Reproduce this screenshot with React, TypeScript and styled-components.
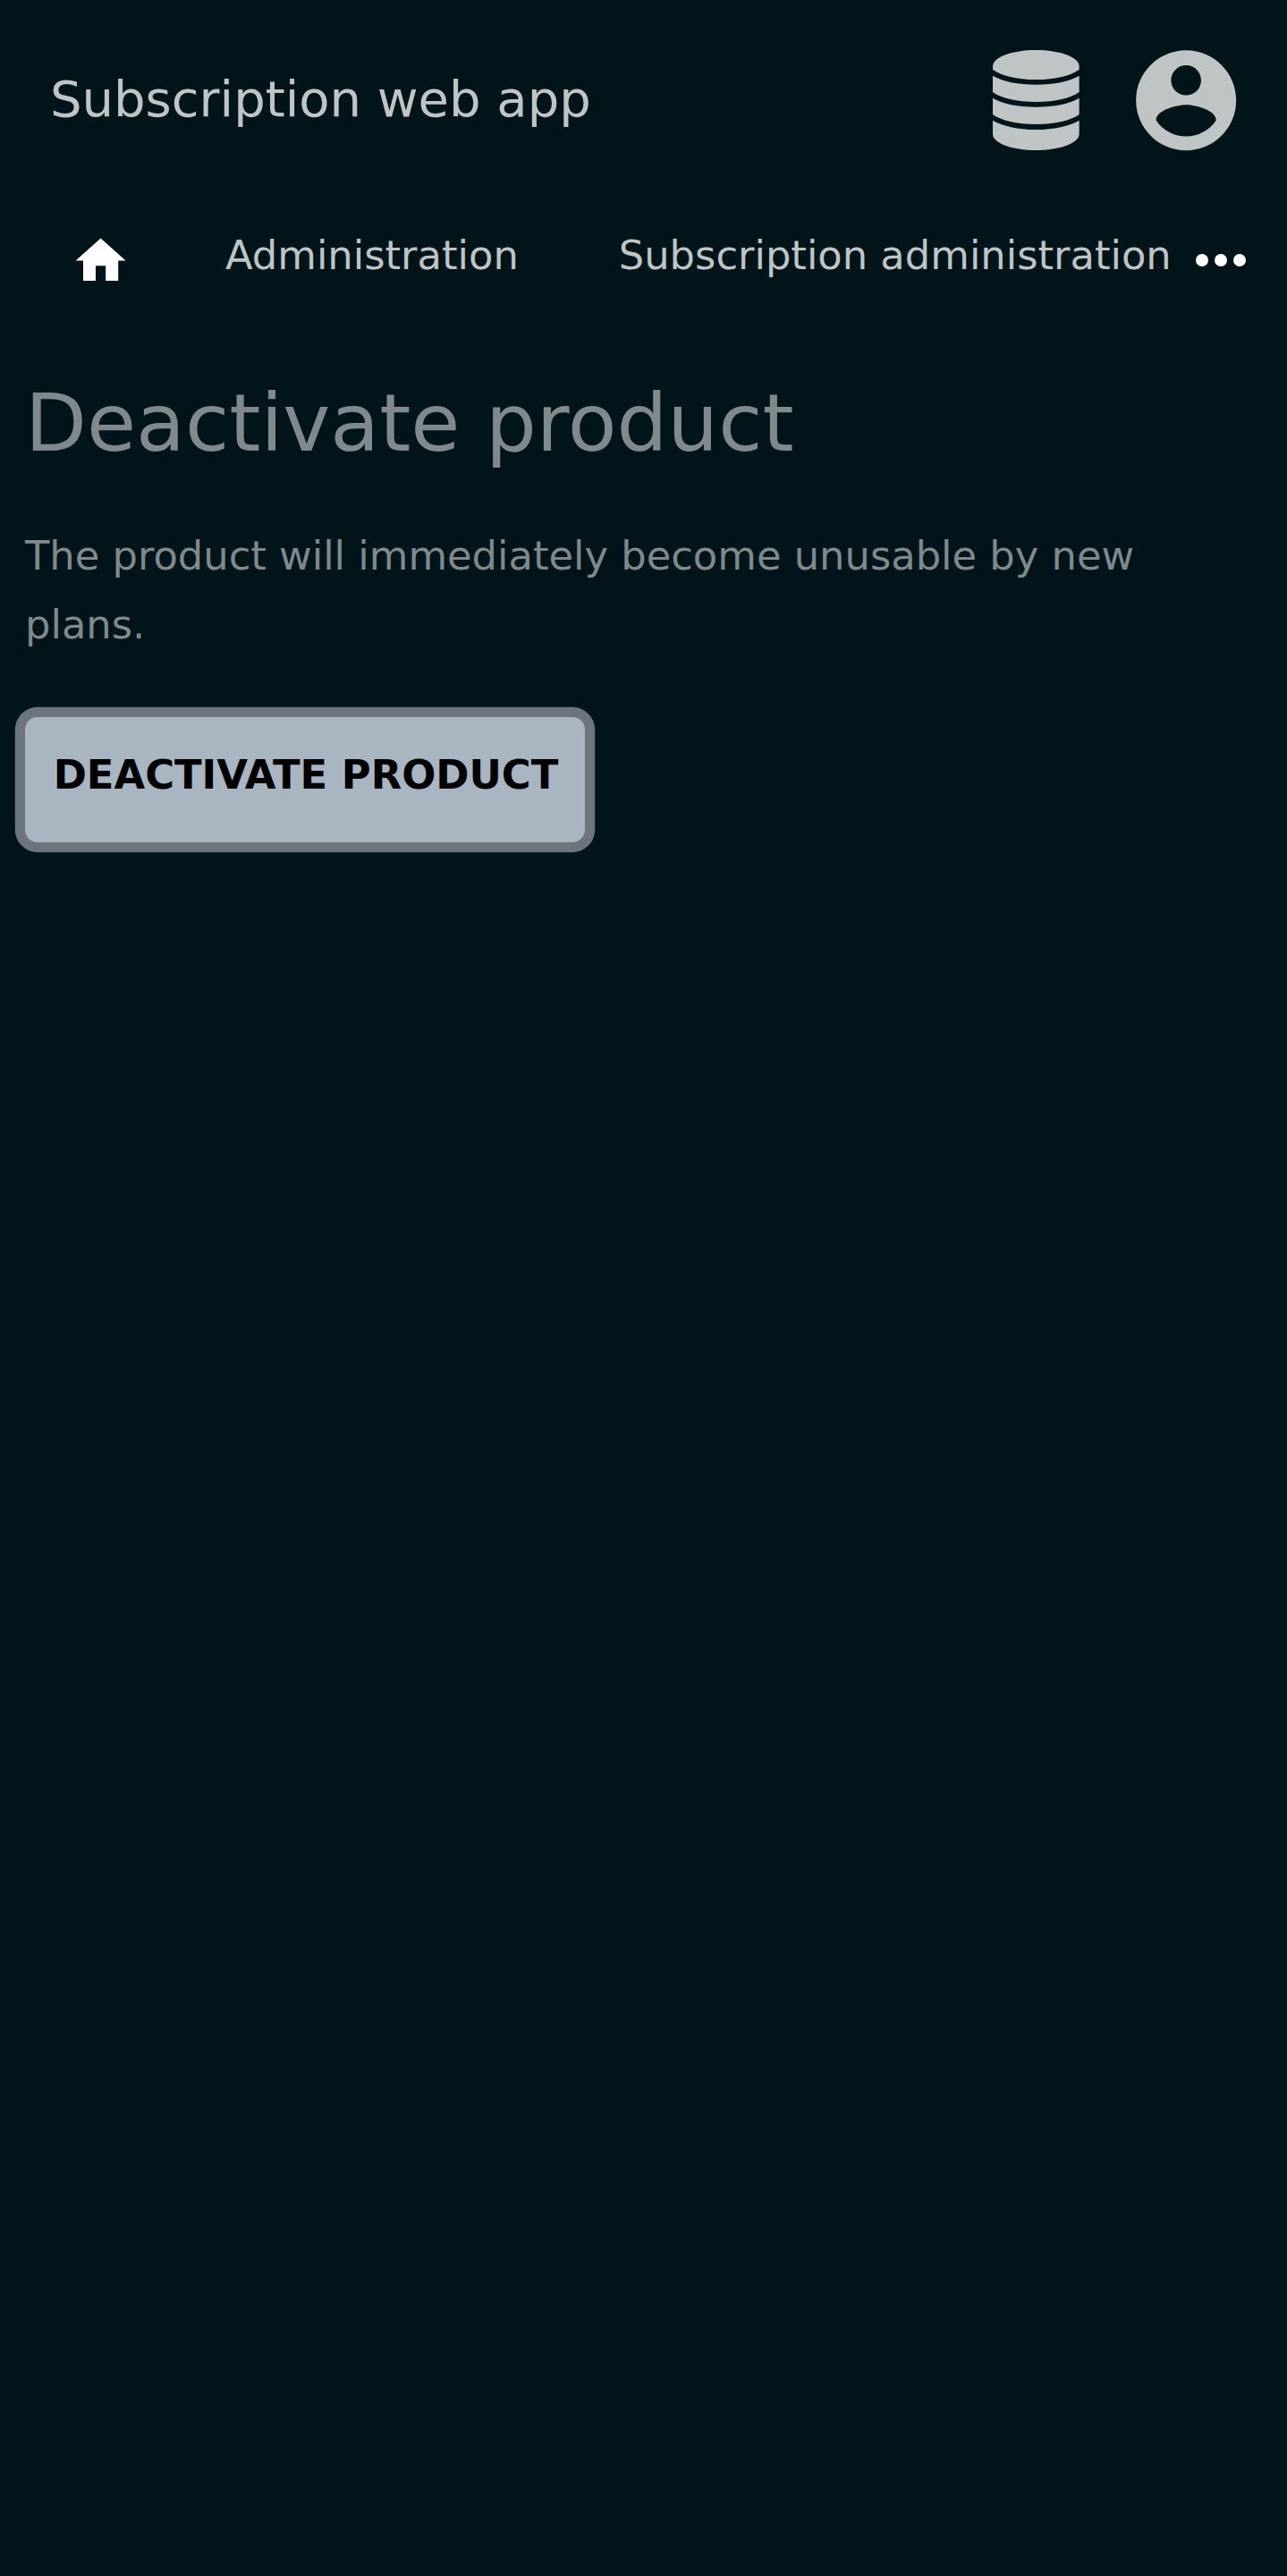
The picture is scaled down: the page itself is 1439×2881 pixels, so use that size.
import React from "react";
import styled, { createGlobalStyle } from "styled-components";

const GlobalStyle = createGlobalStyle`
  *, *::before, *::after { box-sizing: border-box; }
  html { background: #001419; }
  body {
    margin: 0;
    background: #001419;
    color: #80898c;
    font-family: "DejaVu Sans", sans-serif;
    font-size: 44.8px;
    line-height: 77px;
  }
`;

const Page = styled.div`
  display: flex;
  flex-direction: column;
  min-height: 2881px;
`;

const Header = styled.header`
  display: flex;
  align-items: center;
  justify-content: space-between;
  height: 224px;
  padding: 0 45.2px 0 56px;
  color: #bfc4c5;
`;

const Brand = styled.span`
  padding-bottom: 3px;
  font-size: 56px;
  line-height: 84px;
`;

const Actions = styled.div`
  display: flex;
  align-items: center;
  gap: 44.8px;
`;

const Icon = styled.svg<{ $size: number }>`
  display: block;
  flex: none;
  width: ${(p) => p.$size}px;
  height: ${(p) => p.$size}px;
  fill: currentColor;
`;

const Nav = styled.nav`
  display: flex;
  align-items: center;
  height: 136px;
  padding: 0 40px 0 79px;
  color: #bfc4c5;
`;

const HomeLink = styled.a`
  color: #fff;
  margin-right: 105.8px;
`;

const NavLink = styled.a<{ $gap: number }>`
  margin-right: ${(p) => p.$gap}px;
  padding-bottom: 13px;
  white-space: nowrap;
`;

const MoreButton = styled.a`
  color: #fff;
  padding-bottom: 2.8px;
`;

const Main = styled.main`
  display: flex;
  flex-direction: column;
  align-items: flex-start;
  padding: 0 28px;
`;

const Title = styled.h1`
  margin: 46px 0 0;
  font-size: 89.6px;
  font-weight: 400;
  line-height: 134px;
`;

const Description = styled.p`
  margin: 43px 0 0;
`;

const SubmitButton = styled.button`
  margin: 64.6px 0 0;
  width: 626.4px;
  height: 140px;
  padding: 0 0 9.6px 31.7px;
  border: 0;
  border-radius: 14px;
  box-shadow: 0 0 0 11.2px #6c757d;
  background: #a9b5c0;
  color: #000;
  font: 700 44.8px/68px "DejaVu Sans", sans-serif;
  text-align: left;
  text-transform: uppercase;
  white-space: nowrap;
`;

export default function App() {
  return (
    <Page>
      <GlobalStyle />
      <Header>
        <Brand>Subscription web app</Brand>
        <Actions>
          <Icon $size={112} viewBox="-21 0 336 336">
            <path d="M0 55C0 24 65 0 145 0S290 24 290 55V65C262 86 210 99 145 99S28 86 0 65Z" />
            <path d="M0 86C33 105 85 116 145 116S257 105 290 86V141C262 161 210 174 145 174S28 161 0 141Z" />
            <path d="M0 161C33 180 85 191 145 191S257 180 290 161V216C262 236 210 249 145 249S28 236 0 216Z" />
            <path d="M0 236C33 255 85 267 145 267S257 255 290 236V282C290 312 226 336 145 336S0 312 0 282Z" />
          </Icon>
          <Icon $size={134.4} viewBox="0 0 24 24">
            <path d="M12 2C6.48 2 2 6.48 2 12s4.480 10 10 10 10-4.480 10-10S17.520 2 12 2zm0 3c1.660 0 3 1.340 3 3s-1.340 3-3 3-3-1.340-3-3 1.340-3 3-3zm0 14.200c-2.500 0-4.710-1.280-6-3.220.030-1.990 4-3.080 6-3.080 1.990 0 5.970 1.090 6 3.080-1.290 1.940-3.500 3.220-6 3.220z" />
          </Icon>
        </Actions>
      </Header>
      <Nav>
        <HomeLink>
          <Icon $size={67.2} viewBox="0 0 24 24">
            <path d="M10 20v-6h4v6h5v-8h3L12 3 2 12h3v8z" />
          </Icon>
        </HomeLink>
        <NavLink $gap={112}>Administration</NavLink>
        <NavLink $gap={27}>Subscription administration</NavLink>
        <MoreButton>
          <Icon $size={56} viewBox="0 0 16 16">
            <circle cx="2" cy="8" r="2" />
            <circle cx="8" cy="8" r="2" />
            <circle cx="14" cy="8" r="2" />
          </Icon>
        </MoreButton>
      </Nav>
      <Main>
        <Title>Deactivate product</Title>
        <Description>The product will immediately become unusable by new plans.</Description>
        <SubmitButton>Deactivate product</SubmitButton>
      </Main>
    </Page>
  );
}
